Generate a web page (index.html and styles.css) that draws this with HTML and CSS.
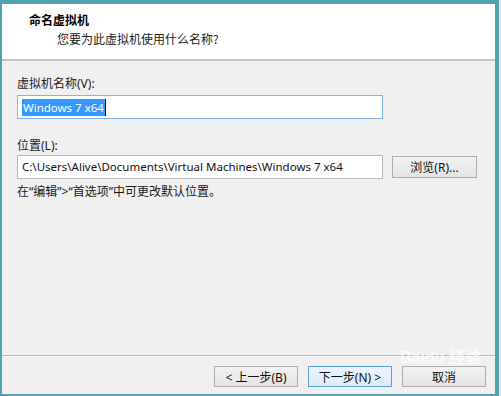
FILE: index.html
```html
<!DOCTYPE html>
<html lang="zh-CN">
<head>
<meta charset="utf-8">
<link rel="stylesheet" href="styles.css">
</head>
<body>
<div class="frame">
  <div class="header">
    <div class="title">命名虚拟机</div>
    <div class="subtitle">您要为此虚拟机使用什么名称?</div>
  </div>
  <div class="main">
    <div class="label">虚拟机名称(V):</div>
    <div class="input focused"><span class="sel">Windows 7 x64</span><span class="caret"></span></div>
    <div class="label label2">位置(L):</div>
    <div class="row">
      <div class="input">C:\Users\Alive\Documents\Virtual Machines\Windows 7 x64</div>
      <div class="btn browse">浏览(R)...</div>
    </div>
    <div class="hint">在“编辑”&gt;“首选项”中可更改默认位置。</div>
  </div>
  <div class="footer">
    <div class="btn">&lt; 上一步(B)</div>
    <div class="btn default">下一步(N) &gt;</div>
    <div class="btn">取消</div>
  </div>
  <div class="watermark">Baidu 经验</div>
</div>
</body>
</html>
```
FILE: styles.css
```css
html, body {
  margin: 0;
  padding: 0;
  background: #e6e6e6;
}
body {
  font-family: "Noto Sans", "Noto Sans CJK SC", sans-serif;
  font-size: 12px;
  color: #1a1a1a;
}
.frame {
  position: relative;
  width: 499px;
  height: 396px;
  box-sizing: border-box;
  border-style: solid;
  border-color: #52a2b1;
  border-width: 4px 4px 2px 2px;
  background: #f0f0f0;
  display: flex;
  flex-direction: column;
  overflow: hidden;
}
.header {
  background: #fff;
  border-bottom: 2px solid #c6c6c6;
  padding: 8px 0 0 27px;
  box-sizing: border-box;
  height: 57px;
}
.title {
  font-weight: bold;
  line-height: 16px;
  color: #000;
  font-family: "Noto Sans CJK SC", sans-serif;
}
.subtitle {
  margin: 3px 0 0 28px;
  line-height: 16px;
  color: #222;
  font-family: "Noto Sans CJK SC", sans-serif;
}
.main {
  flex: 1;
  padding: 15px 0 0 15px;
  display: flex;
  flex-direction: column;
}
.label {
  line-height: 16px;
  height: 16px;
}
.label2 {
  margin-top: 19px;
}
.input {
  margin-top: 2px;
  width: 366px;
  height: 24px;
  box-sizing: border-box;
  border: 1px solid #b8b8b8;
  background: #fff;
  padding: 0 0 0 4px;
  line-height: 22px;
  white-space: nowrap;
  overflow: hidden;
  display: flex;
  align-items: center;
  font-size: 11.5px;
  color: #111;
}
.focused {
  margin-top: 3px;
  border-color: #7fb5e8;
}
.sel {
  background: #3399ff;
  color: #fff;
  line-height: 17px;
  padding: 0 1px;
}
.caret {
  display: inline-block;
  width: 1px;
  height: 17px;
  background: #000;
}
.row {
  display: flex;
  align-items: center;
  margin-top: 1px;
}
.row .input {
  margin-top: 0;
}
.btn {
  box-sizing: border-box;
  width: 84px;
  height: 21px;
  border: 1px solid #adadad;
  background: linear-gradient(#f2f2f2, #e4e4e4);
  display: flex;
  align-items: center;
  justify-content: center;
  font-size: 12px;
  color: #111;
}
.browse {
  margin-left: 9px;
  width: 85px;
  height: 22px;
}
.hint {
  margin-top: 5px;
  line-height: 16px;
}
.footer {
  height: 39px;
  border-top: 1px solid #b4b4b4;
  box-shadow: inset 0 1px 0 #fafafa;
  display: flex;
  justify-content: flex-end;
  padding: 10px 9px 0 0;
  box-sizing: border-box;
  gap: 10px;
}
.default {
  border-color: #5b9fe0;
  background: linear-gradient(#eaf3fc, #dcecfc);
}
.watermark {
  position: absolute;
  left: 398px;
  top: 346px;
  font-family: "Liberation Sans", "Noto Sans CJK SC", sans-serif;
  font-size: 16px;
  font-weight: bold;
  line-height: 16px;
  color: rgba(255, 255, 255, 0.7);
  pointer-events: none;
  white-space: nowrap;
}
```
